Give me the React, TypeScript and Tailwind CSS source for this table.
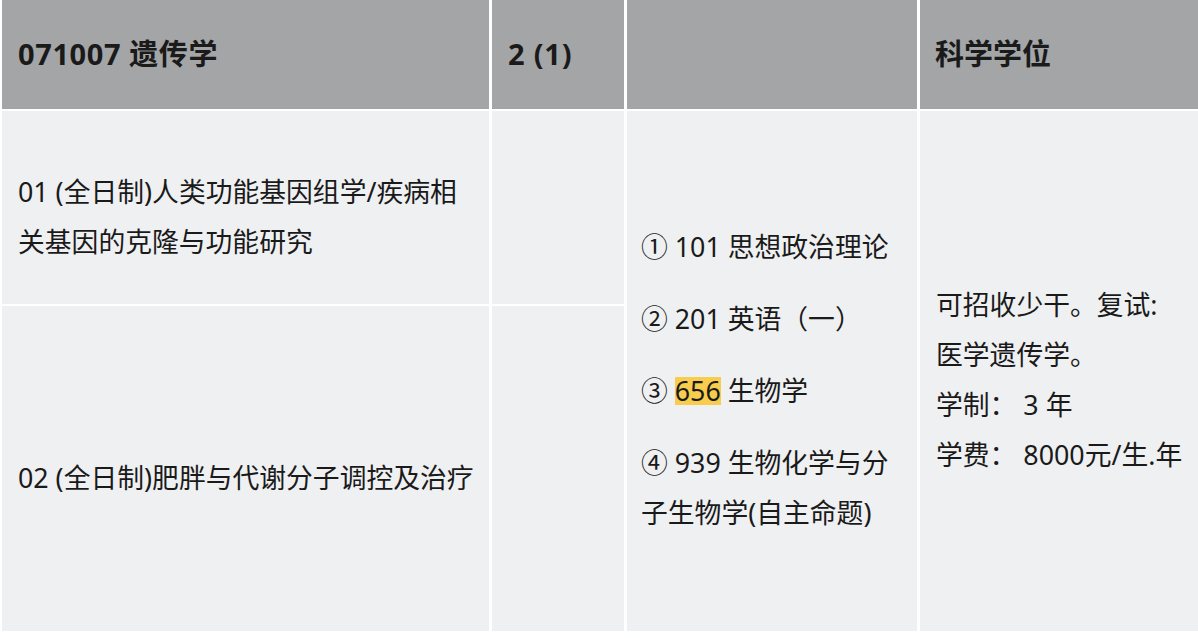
import React from "react";

const font = { fontFamily: '"Noto Sans", "Noto Sans CJK SC", sans-serif' };

export default function App() {
  return (
    <div className="w-[1198px] h-[638px] bg-white overflow-hidden" style={font}>
      <div className="grid grid-cols-[487px_132px_290px_278px] grid-rows-[109px_193px_325px] gap-x-[3px] gap-y-[2px] pl-[2px] text-[#1a1a1a]">
        {/* header */}
        <div className="bg-[#a4a5a7] flex items-center pl-[16px] pb-[2px] text-[29px] font-bold leading-none tracking-[0.6px]">
          071007 遗传学
        </div>
        <div className="bg-[#a4a5a7] flex items-center pl-[16px] pb-[2px] text-[29px] font-bold leading-none tracking-[0.8px]">
          2 (1)
        </div>
        <div className="bg-[#a4a5a7]" />
        <div className="bg-[#a4a5a7] flex items-center pl-[15px] pb-[2px] text-[29px] font-bold leading-none">
          科学学位
        </div>

        {/* row 1 col 1 */}
        <div className="bg-[#eff0f2] flex items-center pl-[16px] pt-[18px] text-[26.8px] leading-[50px]">
          <p>
            01 (全日制)人类功能基因组学/疾病相
            <br />
            关基因的克隆与功能研究
          </p>
        </div>
        {/* row 1 col 2 */}
        <div className="bg-[#eff0f2]" />

        {/* col 3 spanning */}
        <div className="row-span-2 bg-[#eff0f2] flex flex-col justify-center pl-[14px] pt-[18px] text-[26.8px] leading-[50px] gap-[22px]">
          <p>① 101 思想政治理论</p>
          <p>② 201 英语（一）</p>
          <p>
            ③ <span className="inline-block bg-[#f8cc4c] leading-[28px]">656</span> 生物学
          </p>
          <p>
            ④ 939 生物化学与分
            <br />
            子生物学(自主命题)
          </p>
        </div>

        {/* col 4 spanning */}
        <div className="row-span-2 bg-[#eff0f2] flex flex-col justify-center pl-[16px] pt-[18px] text-[26.8px] leading-[50px]">
          <p>可招收少干。复试:</p>
          <p>医学遗传学。</p>
          <p>学制：&nbsp;3 年</p>
          <p>学费：&nbsp;8000元/生.年</p>
        </div>

        {/* row 2 col 1 */}
        <div className="bg-[#eff0f2] flex items-center pl-[16px] pt-[18px] text-[26.8px] leading-[50px]">
          <p>02 (全日制)肥胖与代谢分子调控及治疗</p>
        </div>
        {/* row 2 col 2 */}
        <div className="bg-[#eff0f2]" />
      </div>
    </div>
  );
}
